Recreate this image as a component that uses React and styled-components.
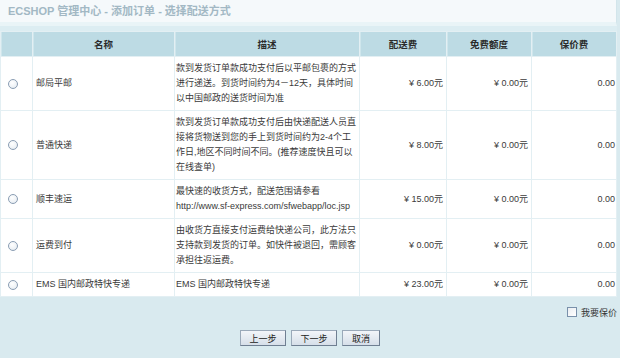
import React, { useState } from 'react';
import styled, { createGlobalStyle } from 'styled-components';

const GlobalStyle = createGlobalStyle`
  html, body {
    margin: 0;
    padding: 0;
    background: #d9eaef;
    font-family: "Liberation Sans", "Noto Sans CJK SC", sans-serif;
    color: #333;
  }
`;

const Page = styled.div`
  width: 620px;
  height: 358px;
  padding-right: 3px;
  box-sizing: border-box;
  background: #d9eaef;
  overflow: hidden;
`;

const Title = styled.h1`
  margin: 0;
  height: 22px;
  line-height: 23px;
  padding-left: 8px;
  font-size: 11px;
  font-weight: bold;
  color: #a2b8c4;
  background: #f5f9fb;
  border-right: 1px solid #d2e5eb;
  border-bottom: 4px solid #e9f4f7;
`;

const ListDiv = styled.div`
  padding-top: 6px;
  background: #dcedf2;
`;

const Table = styled.table`
  width: 100%;
  table-layout: fixed;
  border-collapse: separate;
  border-spacing: 1px;
  margin: -1px 0 0 0;
  background: #e3eff3;
`;

const Th = styled.th`
  height: 24px;
  padding: 0;
  font-size: 9.5px;
  font-weight: bold;
  color: #2b2b2b;
  text-align: center;
  background: #bddbe4;
  box-shadow: inset 1px 0 0 #cfe6ec;
`;

const Td = styled.td`
  padding: ${(p) => (p.$tight ? '4px 1px' : '4px 3px')};
  font-size: 9px;
  line-height: 15px;
  color: #3a3a3a;
  background: #fff;
  text-align: ${(p) => p.$align || 'left'};
  vertical-align: middle;
  white-space: nowrap;
`;

const Radio = styled.input.attrs({ type: 'radio' })`
  appearance: none;
  display: block;
  width: 10px;
  height: 10px;
  margin: 0 0 0 6px;
  border: 1px solid #8a9db3;
  border-radius: 50%;
  background: radial-gradient(circle at 40% 35%, #ffffff 0%, #eef2f6 60%, #d8dfe8 100%);
  box-sizing: border-box;

  &:checked {
    background: radial-gradient(circle, #3a5c8a 0 2px, #f2f5f8 2.5px);
  }
`;

const Footer = styled.div`
  display: flex;
  flex-direction: column;
  padding-top: 9px;
`;

const InsureRow = styled.label`
  display: flex;
  justify-content: flex-end;
  align-items: center;
  gap: 4px;
  height: 12px;
  font-size: 9px;
  color: #333;
`;

const Check = styled.input.attrs({ type: 'checkbox' })`
  appearance: none;
  width: 10px;
  height: 10px;
  margin: 0;
  border: 1px solid #7990aa;
  background: linear-gradient(135deg, #e9edf1, #ffffff);
  box-sizing: border-box;
`;

const Buttons = styled.div`
  display: flex;
  justify-content: center;
  gap: 5px;
  margin-top: 12px;
  padding-left: 3px;
`;

const Button = styled.button`
  width: ${(p) => (p.$short ? '38px' : '46px')};
  height: 16px;
  padding: 0;
  font-family: inherit;
  font-size: 9px;
  color: #222;
  border: 1px solid #6f7f92;
  border-top-color: #9aa9b9;
  border-left-color: #9aa9b9;
  background: linear-gradient(#f2f5f9, #d6dfe9);
  cursor: pointer;
`;

const shippings = [
  {
    name: '邮局平邮',
    desc: ['款到发货订单款成功支付后以平邮包裹的方式', '进行递送。到货时间约为4－12天，具体时间', '以中国邮政的送货时间为准'],
    fee: '¥ 6.00元',
    free: '¥ 0.00元',
    insure: '0.00',
  },
  {
    name: '普通快递',
    desc: ['款到发货订单款成功支付后由快递配送人员直', '接将货物送到您的手上到货时间约为2-4个工', '作日,地区不同时间不同。(推荐速度快且可以', '在线查单)'],
    fee: '¥ 8.00元',
    free: '¥ 0.00元',
    insure: '0.00',
  },
  {
    name: '顺丰速运',
    desc: ['最快速的收货方式，配送范围请参看', 'http://www.sf-express.com/sfwebapp/loc.jsp'],
    fee: '¥ 15.00元',
    free: '¥ 0.00元',
    insure: '0.00',
  },
  {
    name: '运费到付',
    desc: ['由收货方直接支付运费给快递公司，此方法只', '支持款到发货的订单。如快件被退回，需顾客', '承担往返运费。'],
    fee: '¥ 0.00元',
    free: '¥ 0.00元',
    insure: '0.00',
  },
  {
    name: 'EMS 国内邮政特快专递',
    desc: ['EMS 国内邮政特快专递'],
    fee: '¥ 23.00元',
    free: '¥ 0.00元',
    insure: '0.00',
  },
];

const App = () => {
  const [selected, setSelected] = useState(null);
  const [insure, setInsure] = useState(false);

  return (
    <Page>
      <GlobalStyle />
      <Title>ECSHOP 管理中心 - 添加订单 - 选择配送方式</Title>
      <ListDiv>
        <Table>
          <colgroup>
            <col style={{ width: 31 }} />
            <col style={{ width: 141 }} />
            <col style={{ width: 184 }} />
            <col style={{ width: 86 }} />
            <col style={{ width: 84 }} />
            <col />
          </colgroup>
          <thead>
            <tr>
              <Th>&nbsp;</Th>
              <Th>名称</Th>
              <Th>描述</Th>
              <Th>配送费</Th>
              <Th>免费额度</Th>
              <Th>保价费</Th>
            </tr>
          </thead>
          <tbody>
            {shippings.map((s, i) => (
              <tr key={s.name}>
                <Td $tight>
                  <Radio name="shipping" checked={selected === i} onChange={() => setSelected(i)} />
                </Td>
                <Td>{s.name}</Td>
                <Td $tight>
                  {s.desc.map((line, j) => (
                    <React.Fragment key={j}>
                      {j > 0 && <br />}
                      {line}
                    </React.Fragment>
                  ))}
                </Td>
                <Td $align="right">{s.fee}</Td>
                <Td $align="right">{s.free}</Td>
                <Td $align="right" $tight>{s.insure}</Td>
              </tr>
            ))}
          </tbody>
        </Table>
      </ListDiv>
      <Footer>
        <InsureRow>
          <Check checked={insure} onChange={(e) => setInsure(e.target.checked)} />
          我要保价
        </InsureRow>
        <Buttons>
          <Button>上一步</Button>
          <Button>下一步</Button>
          <Button $short>取消</Button>
        </Buttons>
      </Footer>
    </Page>
  );
};

export default App;
